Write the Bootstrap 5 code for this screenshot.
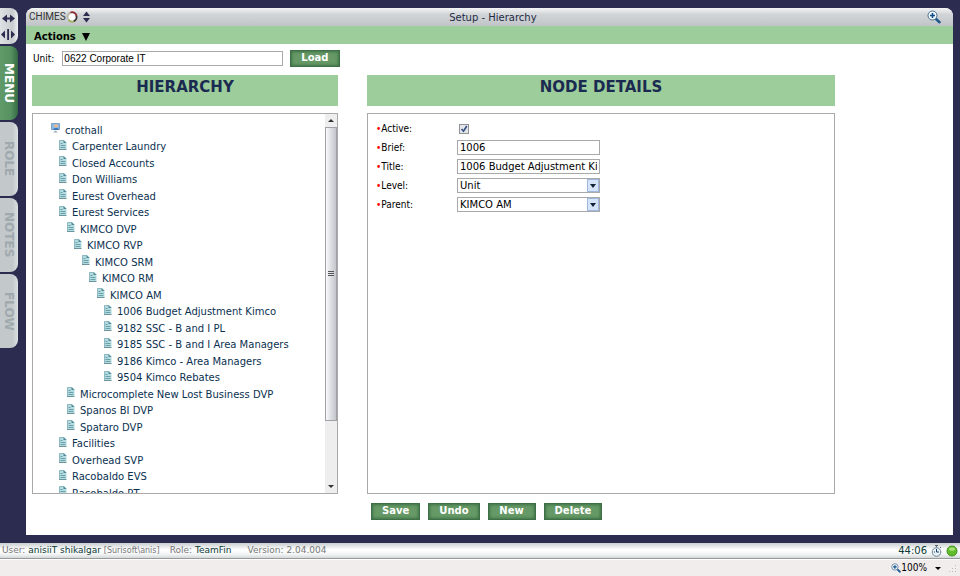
<!DOCTYPE html>
<html lang="en">
<head>
<meta charset="utf-8">
<meta name="viewport" content="width=device-width, initial-scale=1">
<title>Setup - Hierarchy</title>
<link rel="stylesheet" href="https://cdn.jsdelivr.net/npm/bootstrap@5.3.0/dist/css/bootstrap.min.css">
<style>
:root { --navy:#2b2c50; --mint:#9ccd9b; --line:#a9a9a9; }
body { font:10px/16px Verdana,"DejaVu Sans",sans-serif; color:#000; background:var(--navy); }
button, input, select { font:inherit; color:inherit; }
.silver { background:linear-gradient(#f4f5f6,#d2d5d7 35%,#c6cacc 80%,#c0c4c6); }
/* side rail */
.rail { width:18px; gap:2px; padding-top:8px; }
.rail-top { height:36px; border-radius:0 8px 8px 0; background:linear-gradient(90deg,#dfe2e4,#c8cccf 70%,#eef0f1); }
.rail-tab { height:74px; width:18px; border:0; padding:0; border-radius:0 8px 8px 0; writing-mode:vertical-rl; font:bold 12px/16px "DejaVu Sans",sans-serif; text-align:center; color:#a0a9ae; background:linear-gradient(90deg,#c3c9cb 70%,#dde0e1); }
.rail-tab.current { color:#fff; background:linear-gradient(90deg,#5f9a68,#579161 60%,#336a43); }
/* window */
.win { margin:8px 7px 8px 8px; background:#fff; border-radius:8px 8px 0 0; }
.win-bar { height:18px; border-radius:8px 8px 0 0; padding:0 12px 0 3px; }
.brand-text { font:10px/18px Roboto,"Liberation Sans",sans-serif; color:#333; }
.win-title { color:#1d2b45; line-height:18px; padding:1px 32px 0 0; }
.menu-bar { height:18px; background:var(--mint); padding-left:8px; }
.menu-bar button { font-weight:bold; line-height:14px; gap:6px; margin-top:4px; }
.unit-row { height:29px; padding-left:7px; }
.box { border:1px solid var(--line); border-radius:0; background:#fff; }
.unit-box { width:221px; height:15px; padding:0 1px; margin:0 7px 0 8px; font:10px/13px "Liberation Sans",sans-serif; }
.btn-act { border:1px solid #3f6f46; border-radius:0; height:17px; min-width:48px; padding:0 10px 2px; color:#fff; font-weight:bold; line-height:12px; background:#669966; box-shadow:inset 0 0 3px 1px #3f7347; }
.cols { display:grid; grid-template-columns:306px minmax(0,1fr); column-gap:29px; padding:2px 118px 0 6px; }
.head { height:31px; background:var(--mint); margin:0 0 7px; font:bold 15px/24px "DejaVu Sans",sans-serif; color:#1b2a50; text-align:center; }
.pane { height:381px; }
/* tree */
.tree { padding:8px 0 0 18px; margin:0; overflow:hidden; }
.tree li { height:17px; line-height:17px; display:flex; color:#0a3150; white-space:nowrap; }
.tree li:nth-child(even) { height:16px; line-height:16px; }
.tree svg { flex:none; width:9px; height:10px; margin:1px 5px 0 0; }
.tree a { color:inherit; text-decoration:none; }
.d1 { padding-left:7px; } .d2 { padding-left:15px; } .d3 { padding-left:22px; } .d4 { padding-left:30px; }
.d5 { padding-left:37px; } .d6 { padding-left:45px; } .d7 { padding-left:52px; }
.sbar { width:12px; background:#eee; }
.thumb { height:294px; border:1px solid #a0a2a8; background:linear-gradient(90deg,#fafafa,#dcdde2 50%,#c4c6cd); }
.sbar-end { height:13px; }
/* details form */
.fields { padding:5px 8px; }
.field { height:19px; display:grid; grid-template-columns:81px 143px; align-items:center; }
.field label::before { content:"•"; color:#f00; }
.fbox { height:15px; width:143px; padding:0 2px; line-height:13px; }
.pick { appearance:none; background:#fff url("data:image/svg+xml,%3Csvg xmlns='http://www.w3.org/2000/svg' width='12' height='13'%3E%3Crect x='.5' y='.5' width='11' height='12' fill='%23d5e4f8' stroke='%239db8dc'/%3E%3Cpath d='M3 5h6l-3 4z' fill='%23123'/%3E%3C/svg%3E") no-repeat right 0 center; }
.tick { appearance:none; width:10px; height:10px; margin:0 0 0 2px; border:1px solid #8f9296; background:#e4e6ea url("data:image/svg+xml,%3Csvg xmlns='http://www.w3.org/2000/svg' viewBox='0 0 8 8'%3E%3Cpath d='M1.5 4l2 2.2L6.8 1' fill='none' stroke='%23345083' stroke-width='1.6'/%3E%3C/svg%3E") center/8px; }
.actions { padding:9px 0 14px 4px; gap:8px; }
/* bottom bars */
.status { height:16px; padding:0 2px; background:linear-gradient(#c9cdcf,#fff 45%,#f2f4f4 75%,#d5d8d9); border-bottom:1px solid #999; color:#777; line-height:15px; font-size:9px; }
.status b { font-weight:normal; color:#0d3a35; }
.status i { font-style:normal; font-size:8px; }
.status-role { margin-left:10px; }
.status-version { margin-left:16px; }
.status-time { font-size:10px; }
.zoombar { height:17px; background:#f0edec; border-top:1px solid #fff; padding-right:3px; }
.cond { font-family:"DejaVu Sans Condensed","DejaVu Sans",sans-serif; }
</style>
</head>
<body class="d-flex flex-column min-vh-100">
<svg class="d-none" aria-hidden="true">
 <symbol id="doc" viewBox="0 0 9 10"><path d="M1 0h5l2.500 2.500V9H1z" fill="#b4dbe0"/><path d="M1.500 9V.5H5.500" fill="none" stroke="#8fb9c0"/><path d="M5.500 0v3h3z" fill="#4f8792"/><path d="M2.500 3.500h2M2.500 5.500h5M2.500 7.500h5" stroke="#6aa0aa"/><path d="M1 9.500h7.500" stroke="#6d949b"/></symbol>
 <symbol id="lens" viewBox="0 0 14 14"><path d="M8.500 8.500l4 3.700" stroke="#1f5a8c" stroke-width="2.600" stroke-linecap="round"/><circle cx="5.500" cy="5.500" r="4.500" fill="#eef6fc" stroke="#48708f"/><path d="M3 5.500h5M5.500 3v5" stroke="#124f88" stroke-width="1.600"/></symbol>
</svg>
<div class="d-flex flex-fill">
 <nav class="rail d-flex flex-column flex-shrink-0" aria-label="Panels">
  <div class="rail-top">
   <svg width="18" height="36" viewBox="0 0 18 36" fill="#2b2c50"><path d="M2 10.500l5-4v3h3v-3l5 4-5 4v-3H7v3zM1 26.500l4-4v8zM15 26.500l-4-4v8zM7.200 21h1.800v11H7.200z"/></svg>
  </div>
  <button class="rail-tab current" type="button">MENU</button>
  <button class="rail-tab" type="button">ROLE</button>
  <button class="rail-tab" type="button">NOTES</button>
  <button class="rail-tab" type="button">FLOW</button>
 </nav>
 <main class="win flex-fill d-flex flex-column">
  <header class="win-bar silver d-flex align-items-center">
   <span class="brand-text">CHIMES</span>
   <svg width="12" height="12" viewBox="0 0 12 12" fill="none" stroke-width="1.800"><circle cx="6" cy="6" r="3.500" fill="#fff" stroke="none"/><path d="M2 8a4.500 4.500 0 0 1 3-6.500" stroke="#b9b6a8"/><path d="M4.500 1.500a4.500 4.500 0 0 1 6 3.500" stroke="#8c2a2f"/><path d="M10.500 5a4.500 4.500 0 0 1-3 5.300" stroke="#3a3434"/><path d="M8 10.500a4.500 4.500 0 0 1-5.500-2" stroke="#9db05a"/></svg>
   <svg class="ms-1" width="9" height="12" viewBox="0 0 9 12" fill="#2b2c50"><path d="M4.500.500L8 5H1zM4.500 11.500L1 7h7z"/></svg>
   <span class="win-title flex-fill text-center">Setup - Hierarchy</span>
   <svg width="14" height="14"><use href="#lens"/></svg>
  </header>
  <div class="menu-bar d-flex"><button class="bg-transparent border-0 p-0 d-flex align-items-center" type="button">Actions <svg width="8" height="8" viewBox="0 0 8 8"><path d="M0 0h8L4 8z"/></svg></button></div>
  <div class="unit-row d-flex align-items-center">
   <label class="cond" for="unit">Unit:</label>
   <input class="box unit-box" id="unit" value="0622 Corporate IT">
   <button class="btn-act" type="button">Load</button>
  </div>
  <div class="cols">
   <section>
    <h2 class="head">HIERARCHY</h2>
    <div class="box pane d-flex">
     <ul class="tree list-unstyled flex-fill">
      <li><svg viewBox="0 0 9 10"><path d="M.5.500h8v6h-8z" fill="#8dbbe6" stroke="#7ba0c4"/><circle cx="5" cy="3" r="1.800" fill="#f2b88a"/><path d="M2 7c1-3 5-3 6 0z" fill="#3a75b8"/><path d="M2 9.500l2.500-2 2.500 2z" fill="#9ab"/></svg><a href="#">crothall</a></li>
      <li class="d1"><svg><use href="#doc"/></svg><a href="#">Carpenter Laundry</a></li>
      <li class="d1"><svg><use href="#doc"/></svg><a href="#">Closed Accounts</a></li>
      <li class="d1"><svg><use href="#doc"/></svg><a href="#">Don Williams</a></li>
      <li class="d1"><svg><use href="#doc"/></svg><a href="#">Eurest Overhead</a></li>
      <li class="d1"><svg><use href="#doc"/></svg><a href="#">Eurest Services</a></li>
      <li class="d2"><svg><use href="#doc"/></svg><a href="#">KIMCO DVP</a></li>
      <li class="d3"><svg><use href="#doc"/></svg><a href="#">KIMCO RVP</a></li>
      <li class="d4"><svg><use href="#doc"/></svg><a href="#">KIMCO SRM</a></li>
      <li class="d5"><svg><use href="#doc"/></svg><a href="#">KIMCO RM</a></li>
      <li class="d6"><svg><use href="#doc"/></svg><a href="#">KIMCO AM</a></li>
      <li class="d7"><svg><use href="#doc"/></svg><a href="#">1006 Budget Adjustment Kimco</a></li>
      <li class="d7"><svg><use href="#doc"/></svg><a href="#">9182 SSC - B and I PL</a></li>
      <li class="d7"><svg><use href="#doc"/></svg><a href="#">9185 SSC - B and I Area Managers</a></li>
      <li class="d7"><svg><use href="#doc"/></svg><a href="#">9186 Kimco - Area Managers</a></li>
      <li class="d7"><svg><use href="#doc"/></svg><a href="#">9504 Kimco Rebates</a></li>
      <li class="d2"><svg><use href="#doc"/></svg><a href="#">Microcomplete New Lost Business DVP</a></li>
      <li class="d2"><svg><use href="#doc"/></svg><a href="#">Spanos BI DVP</a></li>
      <li class="d2"><svg><use href="#doc"/></svg><a href="#">Spataro DVP</a></li>
      <li class="d1"><svg><use href="#doc"/></svg><a href="#">Facilities</a></li>
      <li class="d1"><svg><use href="#doc"/></svg><a href="#">Overhead SVP</a></li>
      <li class="d1"><svg><use href="#doc"/></svg><a href="#">Racobaldo EVS</a></li>
      <li class="d1"><svg><use href="#doc"/></svg><a href="#">Racobaldo PT</a></li>
     </ul>
     <div class="sbar d-flex flex-column flex-shrink-0" aria-hidden="true">
      <div class="sbar-end d-flex justify-content-center align-items-center"><svg width="6" height="3" viewBox="0 0 6 3"><path d="M0 3h6L3 0z" fill="#333"/></svg></div>
      <div class="thumb d-flex justify-content-center align-items-center"><svg width="6" height="6" viewBox="0 0 6 6"><path d="M0 .5h6M0 2.500h6M0 4.500h6" stroke="#555"/></svg></div>
      <div class="sbar-end mt-auto d-flex justify-content-center align-items-center"><svg width="6" height="3" viewBox="0 0 6 3"><path d="M0 0h6L3 3z" fill="#333"/></svg></div>
     </div>
    </div>
   </section>
   <section>
    <h2 class="head">NODE DETAILS</h2>
    <form class="box pane fields">
     <div class="field"><label class="cond" for="active">Active:</label><input class="tick" type="checkbox" id="active" checked></div>
     <div class="field"><label class="cond" for="brief">Brief:</label><input class="box fbox" id="brief" value="1006"></div>
     <div class="field"><label class="cond" for="ttl">Title:</label><input class="box fbox" id="ttl" value="1006 Budget Adjustment Kimco"></div>
     <div class="field"><label class="cond" for="level">Level:</label><select class="box fbox pick" id="level"><option>Unit</option></select></div>
     <div class="field"><label class="cond" for="parent">Parent:</label><select class="box fbox pick" id="parent"><option>KIMCO AM</option></select></div>
    </form>
    <div class="actions d-flex">
     <button class="btn-act" type="button">Save</button>
     <button class="btn-act" type="button">Undo</button>
     <button class="btn-act" type="button">New</button>
     <button class="btn-act" type="button">Delete</button>
    </div>
   </section>
  </div>
 </main>
</div>
<footer>
 <div class="status d-flex align-items-center">
  <span>User: <b>anisiiT shikalgar</b> <i>[Surisoft\anis]</i></span>
  <span class="status-role">Role: <b>TeamFin</b></span>
  <span class="status-version">Version: 2.04.004</span>
  <b class="status-time ms-auto me-1">44:06</b>
  <svg class="me-1" width="11" height="12" viewBox="0 0 11 12"><path d="M4 .5h3M5.500.500v2M9 2l1 1" stroke="#567"/><circle cx="5.500" cy="7" r="4.300" fill="#e9f2f8" stroke="#6d8490"/><path d="M5.500 4v3h2.500M3 7h1" stroke="#1c3e66" fill="none"/></svg>
  <svg width="12" height="12" viewBox="0 0 12 12"><circle cx="6" cy="6" r="5" fill="#62bd2c" stroke="#3f8f1c"/><ellipse cx="6" cy="4" rx="3" ry="1.800" fill="#a6e077"/></svg>
 </div>
 <div class="zoombar cond d-flex align-items-center justify-content-end">
  <svg width="10" height="10"><use href="#lens"/></svg><span>100%</span>
  <svg class="ms-2 me-2" width="6" height="3" viewBox="0 0 6 3"><path d="M0 0h6L3 3z"/></svg>
  <svg width="8" height="10" viewBox="0 0 8 10" fill="#bbb"><path d="M6 2h1v1H6zM6 5h1v1H6zM3 5h1v1H3zM6 8h1v1H6zM3 8h1v1H3zM0 8h1v1H0z"/></svg>
 </div>
</footer>
<script src="https://cdn.jsdelivr.net/npm/bootstrap@5.3.0/dist/js/bootstrap.bundle.min.js"></script>
</body>
</html>
